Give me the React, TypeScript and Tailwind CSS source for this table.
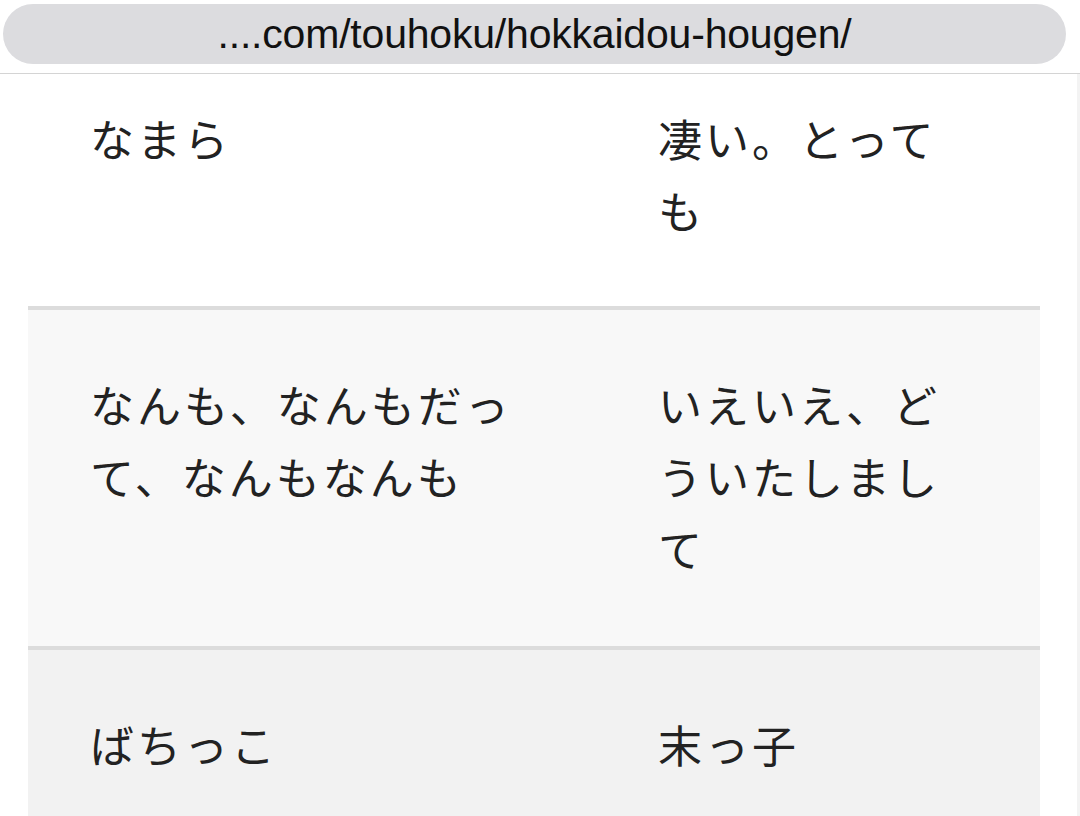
const rows = [
  { term: "なまら", meaning: "凄い。とっても", bg: "bg-white", pad: "pt-[28px] pb-[60px]" },
  { term: "なんも、なんもだって、なんもなんも", meaning: "いえいえ、どういたしまして", bg: "bg-[#f8f8f8]", pad: "pt-[58px] pb-[62px]" },
  { term: "ばちっこ", meaning: "末っ子", bg: "bg-[#f2f2f2]", pad: "pt-[58px] pb-[140px]" },
];

export default function App() {
  return (
    <div className="w-[1080px] h-[816px] overflow-hidden bg-white flex flex-col font-['Noto_Sans_CJK_JP',sans-serif] text-[#222]">
      <header className="h-[74px] shrink-0 border-b border-[#d4d4d4] bg-white pt-[4px] pl-[3px] pr-[14px]">
        <div className="h-[60px] rounded-full bg-[#dcdcdf] flex items-center justify-center">
          <span className="font-['Liberation_Sans',sans-serif] text-[41px] tracking-[-0.2px] text-[#111] leading-none">
            ....com/touhoku/hokkaidou-hougen/
          </span>
        </div>
      </header>
      <div className="flex-1 flex">
        <div className="flex-1 pl-[28px] pr-[37px]">
          {rows.map((r, i) => (
            <div
              key={i}
              className={`flex ${r.bg} ${i > 0 ? "border-t-[4px] border-[#dcdcdc]" : ""} ${r.pad} text-[44px] leading-[72px] tracking-[3px]`}
            >
              <div className="w-[568px] pl-[62px] pr-[66px]">{r.term}</div>
              <div className="flex-1 pl-[62px] pr-[82px]">{r.meaning}</div>
            </div>
          ))}
        </div>
        <div className="w-[3px] bg-[#f3f3f3]" />
      </div>
    </div>
  );
}
